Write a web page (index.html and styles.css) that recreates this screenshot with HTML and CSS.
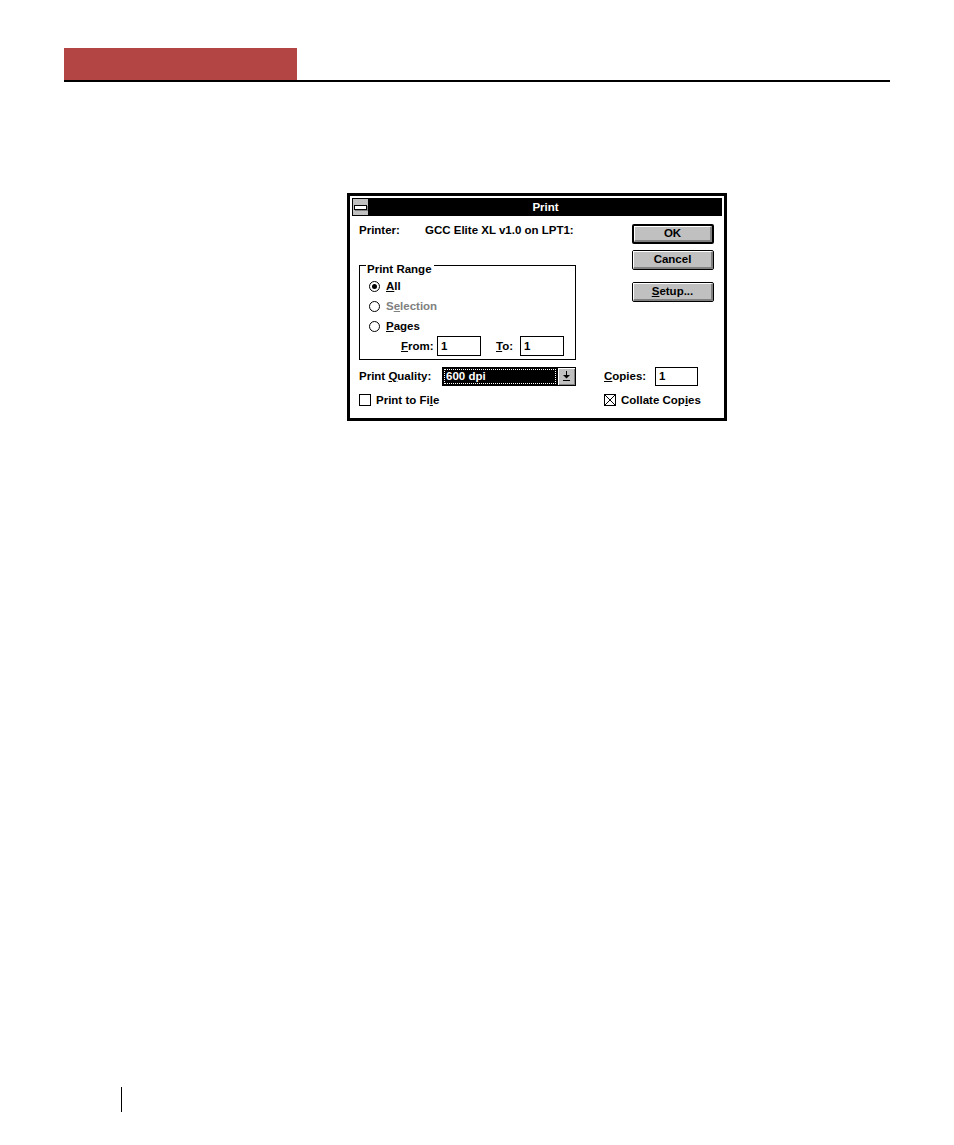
FILE: index.html
```html
<!DOCTYPE html>
<html>
<head>
<meta charset="utf-8">
<link rel="stylesheet" href="styles.css">
</head>
<body>
<div class="page">
  <div class="header"><div class="redbar"></div></div>

  <div class="dialog">
    <div class="titlebar">
      <div class="sysmenu"><div class="sysbar"></div></div>
      <div class="title">Print</div>
    </div>
    <div class="client">
      <div class="top">
        <div class="leftcol">
          <div class="printer-line"><span class="lbl-printer">Printer:</span><span>GCC Elite XL v1.0 on LPT1:</span></div>
          <div class="group">
            <span class="group-label">Print Range</span>
            <div class="radio-row"><span class="radio checked"></span><span><u>A</u>ll</span></div>
            <div class="radio-row disabled"><span class="radio"></span><span>S<u>e</u>lection</span></div>
            <div class="radio-row"><span class="radio"></span><span><u>P</u>ages</span></div>
            <div class="from-row">
              <span class="lbl-from"><u>F</u>rom:</span>
              <span class="field small">1</span>
              <span class="lbl-to"><u>T</u>o:</span>
              <span class="field small">1</span>
            </div>
          </div>
        </div>
        <div class="rightcol">
          <div class="btn default"><span class="btn-face">OK</span></div>
          <div class="btn cancel"><span class="btn-face">Cancel</span></div>
          <div class="btn setup"><span class="btn-face"><u>S</u>etup...</span></div>
        </div>
      </div>

      <div class="row quality-row">
        <div class="row-left">
          <span class="lbl-quality">Print <u>Q</u>uality:</span>
          <div class="combo">
            <div class="combo-value"><span class="combo-focus">600 dpi</span></div>
            <div class="combo-btn">
              <svg width="9" height="11" viewBox="0 0 9 11">
                <rect x="4" y="0" width="1" height="5" fill="#000"/>
                <polygon points="1,4 8,4 4.5,7.5" fill="#000"/>
                <rect x="1" y="9" width="7" height="1" fill="#000"/>
              </svg>
            </div>
          </div>
        </div>
        <div class="row-right">
          <span class="lbl-copies"><u>C</u>opies:</span>
          <span class="field copies">1</span>
        </div>
      </div>

      <div class="row check-row">
        <div class="row-left">
          <span class="checkbox"></span><span>Print to Fi<u>l</u>e</span>
        </div>
        <div class="row-right">
          <span class="checkbox checked">
            <svg width="12" height="12" viewBox="0 0 12 12">
              <line x1="1" y1="1" x2="11" y2="11" stroke="#000" stroke-width="1"/>
              <line x1="11" y1="1" x2="1" y2="11" stroke="#000" stroke-width="1"/>
            </svg>
          </span><span>Collate Cop<u>i</u>es</span>
        </div>
      </div>
    </div>
  </div>

  <div class="footer-mark"></div>
</div>
</body>
</html>
```

FILE: styles.css
```css
html, body {
  margin: 0;
  padding: 0;
  background: #fff;
}

.page {
  padding-top: 48px;
  font-family: "Liberation Sans", Arial, sans-serif;
  font-weight: bold;
  font-size: 11.5px;
  color: #000;
}

.header {
  margin-left: 64px;
  width: 826px;
  border-bottom: 2px solid #000;
  display: flex;
}

.redbar {
  width: 233px;
  height: 32px;
  background: #b44545;
}

/* Dialog */
.dialog {
  margin-top: 111px;
  margin-left: 347px;
  width: 374px;
  height: 222px;
  border: 3px solid #000;
  background: #fff;
  box-sizing: content-box;
  display: flex;
  flex-direction: column;
}

.titlebar {
  margin: 2px 2px 0 2px;
  height: 18px;
  background: #000;
  display: flex;
  align-items: stretch;
}

.sysmenu {
  width: 17px;
  background: #c0c0c0;
  border: 1px solid #000;
  box-sizing: border-box;
  display: flex;
  align-items: center;
  justify-content: center;
}

.sysbar {
  width: 11px;
  height: 3px;
  background: #fff;
  border: 1px solid #000;
  box-shadow: 1px 1px 0 #808080;
}

.title {
  flex: 1;
  color: #fff;
  text-align: center;
  line-height: 18px;
}

.client {
  padding: 8px 0 0 9px;
  line-height: 13px;
}

.top {
  display: flex;
}

.leftcol {
  width: 217px;
}

.printer-line {
  display: flex;
  height: 13px;
  align-items: center;
}

.lbl-printer {
  width: 66px;
}

.group {
  position: relative;
  margin-top: 28px;
  border: 1px solid #000;
  padding: 10px 0 3px 9px;
}

.group-label {
  position: absolute;
  left: 6px;
  top: -2px;
  background: #fff;
  padding: 0 2px 0 1px;
  line-height: 11px;
}

.radio-row {
  display: flex;
  align-items: center;
  height: 20px;
}

.radio-row.disabled {
  color: #808080;
}

.radio {
  width: 11px;
  height: 11px;
  border: 1px solid #000;
  border-radius: 50%;
  box-sizing: border-box;
  margin-right: 6px;
  background: #fff;
  position: relative;
  flex: none;
}

.radio.checked::after {
  content: "";
  position: absolute;
  left: 2px;
  top: 2px;
  width: 5px;
  height: 5px;
  border-radius: 50%;
  background: #000;
}

.from-row {
  display: flex;
  align-items: center;
  height: 20px;
  padding-left: 32px;
}

.lbl-from {
  width: 36px;
}

.lbl-to {
  margin-left: 15px;
  width: 24px;
}

.field {
  display: flex;
  align-items: center;
  border: 1px solid #000;
  box-sizing: border-box;
  padding-left: 3px;
  background: #fff;
}

.field.small {
  width: 44px;
  height: 20px;
}

.rightcol {
  margin-left: 56px;
  width: 82px;
  display: flex;
  flex-direction: column;
}

.btn {
  height: 20px;
  border: 1px solid #000;
  border-radius: 2px;
  box-sizing: border-box;
  background: #c0c0c0;
  display: flex;
}

.btn.default {
  border-width: 2px;
}

.btn.cancel {
  margin-top: 6px;
}

.btn.setup {
  margin-top: 12px;
}

.btn-face {
  flex: 1;
  display: flex;
  align-items: center;
  justify-content: center;
  border-top: 1px solid #fff;
  border-left: 1px solid #fff;
  border-right: 2px solid #808080;
  border-bottom: 2px solid #808080;
}

.row {
  display: flex;
  align-items: center;
}

.row-left {
  width: 217px;
  display: flex;
  align-items: center;
}

.row-right {
  margin-left: 28px;
  display: flex;
  align-items: center;
}

.quality-row {
  margin-top: 7px;
  height: 19px;
}

.lbl-quality {
  width: 83px;
}

.combo {
  width: 134px;
  height: 19px;
  border: 1px solid #000;
  box-sizing: border-box;
  display: flex;
}

.combo-value {
  flex: 1;
  background: #000;
  padding: 1px;
  display: flex;
}

.combo-focus {
  flex: 1;
  border: 1px dotted #fff;
  color: #fff;
  padding-left: 1px;
  line-height: 13px;
}

.combo-btn {
  width: 17px;
  border-left: 1px solid #000;
  background: #c0c0c0;
  display: flex;
  align-items: center;
  justify-content: center;
  box-shadow: inset 1px 1px 0 #fff, inset -1px -1px 0 #808080;
}

.lbl-copies {
  width: 51px;
}

.field.copies {
  width: 43px;
  height: 19px;
}

.check-row {
  margin-top: 8px;
  height: 12px;
}

.checkbox {
  width: 12px;
  height: 12px;
  border: 1px solid #000;
  box-sizing: border-box;
  margin-right: 5px;
  display: flex;
  flex: none;
  overflow: hidden;
}

.checkbox svg {
  margin: -1px;
}

.footer-mark {
  margin-top: 666px;
  margin-left: 121px;
  width: 1px;
  height: 25px;
  background: #000;
}
```
